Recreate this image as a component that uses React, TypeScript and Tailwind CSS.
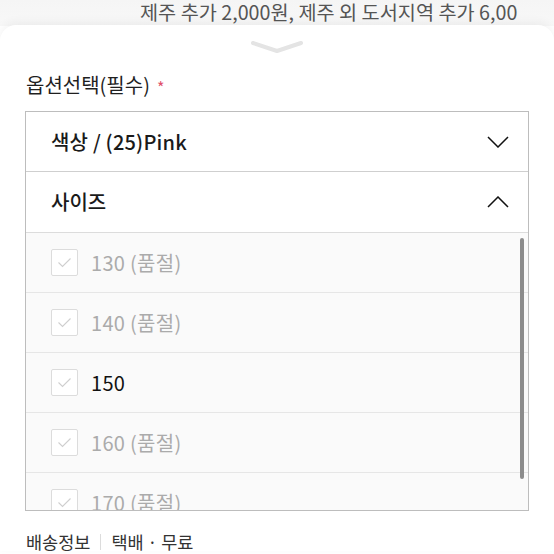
import React from "react";

const sizes = [
  { label: "130 (품절)", soldOut: true },
  { label: "140 (품절)", soldOut: true },
  { label: "150", soldOut: false },
  { label: "160 (품절)", soldOut: true },
  { label: "170 (품절)", soldOut: true },
];

function Check() {
  return (
    <div className="w-[27px] h-[27px] border border-[#dcdcdc] rounded-[2px] bg-white flex items-center justify-center shrink-0">
      <svg width="15" height="11" viewBox="0 0 15 11" fill="none">
        <polyline points="1.5,5.5 5.5,9.5 13.5,1.5" stroke="#cfcfcf" strokeWidth="1.1" />
      </svg>
    </div>
  );
}

export default function App() {
  return (
    <div
      className="w-[554px] h-[554px] overflow-hidden relative bg-white"
      style={{ fontFamily: '"Noto Sans CJK KR", "Noto Sans", sans-serif' }}
    >
      <div className="h-[26px] bg-gradient-to-b from-[#f5f5f5] to-[#f8f8f8] flex items-start">
        <div className="pl-[140px] text-[19.7px] leading-[23px] text-[#555] whitespace-nowrap">
          제주 추가 2,000원, 제주 외 도서지역 추가 6,00
        </div>
      </div>
      <div className="-mt-[1px] bg-white rounded-t-[16px] shadow-[0_-3px_10px_rgba(0,0,0,0.05)] relative">
        <div className="flex justify-center pt-[15px]">
          <svg width="54" height="15" viewBox="0 0 54 15" fill="none">
            <polyline
              points="3,3 27,11 51,3"
              stroke="#e4e4e4"
              strokeWidth="4"
              strokeLinecap="round"
              strokeLinejoin="round"
            />
          </svg>
        </div>
        <div className="px-[26px] pt-[14px] flex items-center gap-[7px] h-[46px]">
          <span className="text-[20px] text-[#1f1f1f] leading-none">옵션선택(필수)</span>
          <span className="text-[16px] text-[#e0506a] leading-none mt-[3px]">*</span>
        </div>
        <div className="mx-[25px] mt-[10px] border border-[#bdbdbd] h-[400px] flex flex-col overflow-hidden">
          <div className="h-[60px] shrink-0 border-b border-[#cfcfcf] flex items-center justify-between pl-[25px] pr-[19px]">
            <span className="text-[20px] font-medium text-[#1a1a1a] tracking-[0.2px]">색상 / (25)Pink</span>
            <svg width="22" height="12" viewBox="0 0 22 12" fill="none">
              <polyline points="1,1 11,11 21,1" stroke="#111" strokeWidth="1.5" />
            </svg>
          </div>
          <div className="h-[61px] shrink-0 border-b border-[#dcdcdc] flex items-center justify-between pl-[25px] pr-[19px]">
            <span className="text-[20px] font-medium text-[#1a1a1a]">사이즈</span>
            <svg width="22" height="12" viewBox="0 0 22 12" fill="none">
              <polyline points="1,11 11,1 21,11" stroke="#111" strokeWidth="1.5" />
            </svg>
          </div>
          <div className="relative flex-1 overflow-hidden bg-[#fafafa]">
            {sizes.map((s) => (
              <div
                key={s.label}
                className="h-[60px] border-b border-[#e6e6e6] flex items-center gap-[13px] pl-[25px]"
              >
                <Check />
                <span
                  className={
                    s.soldOut
                      ? "text-[20px] text-[#ababab] tracking-[0.3px]"
                      : "text-[20px] text-[#111] tracking-[0.3px]"
                  }
                >
                  {s.label}
                </span>
              </div>
            ))}
            <div className="absolute right-[4px] top-[5px] w-[4px] h-[241px] rounded-full bg-[#8c8c8c]" />
          </div>
        </div>
        <div className="px-[26px] pt-[22px] flex items-center text-[17.5px] text-[#333] leading-none">
          <span>배송정보</span>
          <span className="mx-[10px] w-px h-[16px] bg-[#dcdcdc]" />
          <span>택배 · 무료</span>
        </div>
      </div>
    </div>
  );
}
